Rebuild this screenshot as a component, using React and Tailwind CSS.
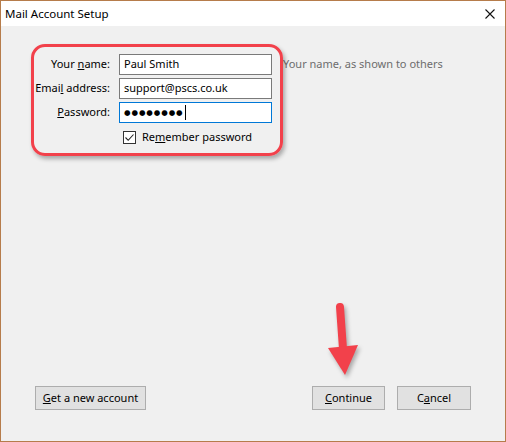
import React from 'react';

const font = { fontFamily: '"Segoe UI", "Noto Sans", "Open Sans", sans-serif' };

function Field({ label, value, focused }) {
  return (
    <div className="flex items-center h-[21px]">
      <label className="w-[110px] text-right pr-[1px] text-[11px] text-black">{label}</label>
      <div
        className={`ml-[8px] w-[153px] h-[21px] bg-white border flex items-center pl-[4px] text-[11px] text-black ${
          focused ? 'border-[#0078d7]' : 'border-[#7a7a7a]'
        }`}
      >
        {value}
      </div>
    </div>
  );
}

function Btn({ children, className = '' }) {
  return (
    <button
      className={`h-[24px] bg-[#e1e1e1] border border-[#adadad] text-[11px] text-black flex items-center justify-center ${className}`}
    >
      {children}
    </button>
  );
}

export default function App() {
  return (
    <div
      style={font}
      className="relative w-[506px] h-[442px] border border-[#b67c4b] flex flex-col bg-[#f0f0f0] overflow-hidden"
    >
      {/* title bar */}
      <div className="h-[25px] bg-white flex items-center justify-between pl-[4px] pr-[9px] shrink-0">
        <span className="text-[11.5px] text-black">Mail Account Setup</span>
        <svg width="10" height="10" viewBox="0 0 10 10" className="mr-[1px]">
          <path d="M0.5 0.5L9.5 9.5M9.5 0.5L0.5 9.5" stroke="#111" strokeWidth="1.1" />
        </svg>
      </div>

      {/* body */}
      <div className="flex-1 flex flex-col pt-[28px]">
        <div className="flex flex-col gap-[3px]">
          <div className="flex items-center">
            <Field label={<>Your <u>n</u>ame:</>} value="Paul Smith" />
            <span className="ml-[11px] text-[11px] text-[#6d6d6d]">Your name, as shown to others</span>
          </div>
          <Field label={<>Emai<u>l</u> address:</>} value="support@pscs.co.uk" />
          <Field
            focused
            label={<><u>P</u>assword:</>}
            value={
              <span className="flex items-center">
                <span className="text-[7.5px] tracking-[0.9px] font-bold" style={{ fontFamily: '"DejaVu Sans", sans-serif' }}>
                  ●●●●●●●●
                </span>
                <span className="w-[1px] h-[15px] bg-black ml-[1px]" />
              </span>
            }
          />
        </div>
        <div className="flex items-center mt-[6px] ml-[122px]">
          <span className="w-[13px] h-[13px] bg-white border border-[#333] flex items-center justify-center">
            <svg width="11" height="11" viewBox="0 0 11 11">
              <path d="M1.5 5.5L4.2 8.3L9.5 2.5" fill="none" stroke="#222" strokeWidth="1.1" />
            </svg>
          </span>
          <span className="ml-[6px] text-[11px] text-black">
            Re<u>m</u>ember password
          </span>
        </div>

        <div className="flex-1" />

        <div className="flex items-center pl-[34px] pr-[34px] pb-[31px]">
          <Btn className="w-[111px]">
            <span><u>G</u>et a new account</span>
          </Btn>
          <div className="flex-1" />
          <Btn className="w-[73px]">
            <span><u>C</u>ontinue</span>
          </Btn>
          <Btn className="w-[74px] ml-[12px]">
            <span>C<u>a</u>ncel</span>
          </Btn>
        </div>
      </div>

      {/* annotation: highlight box */}
      <div className="absolute left-[30px] top-[43px] w-[252px] h-[112px] border-[3px] border-[#f2414b] rounded-[14px] shadow-[2px_3px_4px_rgba(0,0,0,0.3)] pointer-events-none" />

      {/* annotation: arrow */}
      <svg
        className="absolute left-[322px] top-[298px] pointer-events-none"
        width="44"
        height="84"
        viewBox="0 0 44 84"
        style={{ filter: 'drop-shadow(2px 3px 2px rgba(0,0,0,0.3))' }}
      >
        <path d="M17 8L20 50" stroke="#f2414b" strokeWidth="8" strokeLinecap="round" fill="none" />
        <path d="M5 49L35 46L22 76Z" fill="#f2414b" />
      </svg>
    </div>
  );
}
